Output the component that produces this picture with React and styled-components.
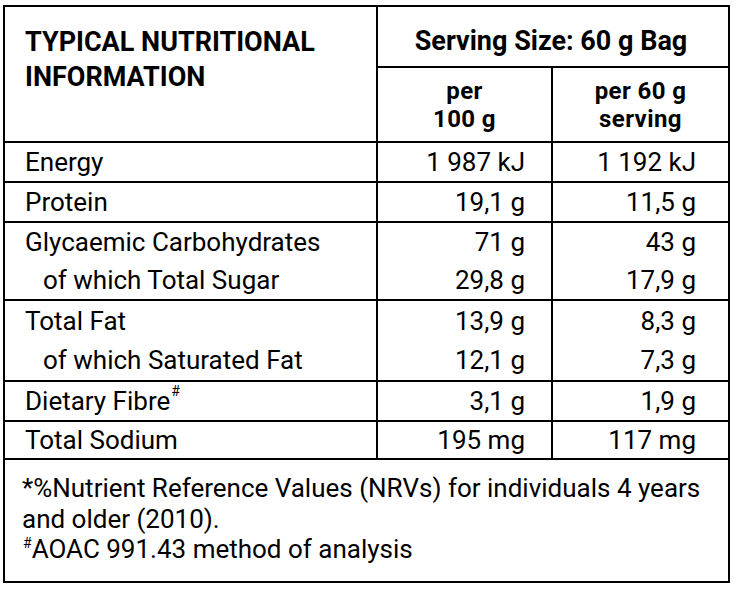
import React from 'react';
import styled, { createGlobalStyle } from 'styled-components';

const Global = createGlobalStyle`
  html, body { margin: 0; padding: 0; background: #fff; }
  body {
    font-family: Roboto, "Liberation Sans", Arial, sans-serif;
    color: #000;
  }
  * { box-sizing: border-box; }
`;

const Frame = styled.div`
  width: 727px;
  margin: 5px 0 0 3px;
  border: 2px solid #000;
  font-size: 26px;
`;

const Header = styled.div`
  display: grid;
  grid-template-columns: 373px 1fr;
  height: 134px;
`;

const Title = styled.div`
  border-right: 2px solid #000;
  padding: 18px 0 0 20px;
  font-weight: 700;
  font-size: 27px;
  line-height: 35px;
`;

const ServingBlock = styled.div`
  display: flex;
  flex-direction: column;
`;

const ServingTitle = styled.div`
  height: 61px;
  border-bottom: 2px solid #000;
  display: flex;
  align-items: center;
  justify-content: center;
  padding-top: 8px;
  padding-right: 4px;
  font-weight: 700;
  font-size: 27px;
`;

const SubHeads = styled.div`
  flex: 1;
  display: grid;
  grid-template-columns: 175px 1fr;
`;

const SubHead = styled.div`
  display: flex;
  flex-direction: column;
  align-items: center;
  justify-content: center;
  font-weight: 700;
  font-size: 24px;
  letter-spacing: 0.4px;
  padding-top: 1px;
  border-right: ${(p) => (p.$last ? 'none' : '2px solid #000')};
`;

const SubLine = styled.div`
  height: 28px;
  line-height: 28px;
  white-space: nowrap;
`;

const Group = styled.div`
  display: grid;
  grid-template-columns: 373px 175px 1fr;
  border-top: 2px solid #000;
`;

const Cell = styled.div`
  border-right: ${(p) => (p.$last ? 'none' : '2px solid #000')};
  padding-left: ${(p) => (p.$name ? '20px' : '0')};
  padding-right: ${(p) => p.$pr || '0'};
`;

const Line = styled.div`
  height: ${(p) => p.$h || 38}px;
  display: flex;
  align-items: center;
  justify-content: ${(p) => (p.$right ? 'flex-end' : 'flex-start')};
  padding-left: ${(p) => (p.$indent ? '18px' : '0')};
  white-space: nowrap;
`;

const Sup = styled.sup`
  font-size: 14px;
  line-height: 0;
  vertical-align: 0;
  position: relative;
  top: -10px;
  margin-left: 1px;
`;

const Footer = styled.div`
  border-top: 2px solid #000;
  height: 123px;
  padding: 13px 10px 0 17px;
  line-height: 30.5px;
`;

const groups = [
  { lines: [{ n: 'Energy', a: '1 987 kJ', b: '1 192 kJ' }] },
  { lines: [{ n: 'Protein', a: '19,1 g', b: '11,5 g' }] },
  {
    lines: [
      { n: 'Glycaemic Carbohydrates', a: '71 g', b: '43 g' },
      { n: 'of which Total Sugar', a: '29,8 g', b: '17,9 g', indent: true },
    ],
  },
  {
    h: 39.5,
    lines: [
      { n: 'Total Fat', a: '13,9 g', b: '8,3 g' },
      { n: 'of which Saturated Fat', a: '12,1 g', b: '7,3 g', indent: true },
    ],
  },
  { lines: [{ n: 'Dietary Fibre', sup: '#', a: '3,1 g', b: '1,9 g' }] },
  { h: 36, lines: [{ n: 'Total Sodium', a: '195 mg', b: '117 mg' }] },
];

export default function App() {
  return (
    <>
      <Global />
      <Frame>
        <Header>
          <Title>
            TYPICAL NUTRITIONAL
            <br />
            INFORMATION
          </Title>
          <ServingBlock>
            <ServingTitle>Serving Size: 60 g Bag</ServingTitle>
            <SubHeads>
              <SubHead>
                <SubLine>per</SubLine>
                <SubLine>100 g</SubLine>
              </SubHead>
              <SubHead $last>
                <SubLine>per 60 g</SubLine>
                <SubLine>serving</SubLine>
              </SubHead>
            </SubHeads>
          </ServingBlock>
        </Header>
        {groups.map((g, gi) => (
          <Group key={gi}>
            <Cell $name>
              {g.lines.map((l, i) => (
                <Line key={i} $h={g.h} $indent={l.indent}>
                  {l.n}
                  {l.sup && <Sup>{l.sup}</Sup>}
                </Line>
              ))}
            </Cell>
            <Cell $pr="26px">
              {g.lines.map((l, i) => (
                <Line key={i} $h={g.h} $right>
                  {l.a}
                </Line>
              ))}
            </Cell>
            <Cell $last $pr="32px">
              {g.lines.map((l, i) => (
                <Line key={i} $h={g.h} $right>
                  {l.b}
                </Line>
              ))}
            </Cell>
          </Group>
        ))}
        <Footer>
          *%Nutrient Reference Values (NRVs) for individuals 4 years
          <br />
          and older (2010).
          <br />
          <Sup>#</Sup>AOAC 991.43 method of analysis
        </Footer>
      </Frame>
    </>
  );
}
